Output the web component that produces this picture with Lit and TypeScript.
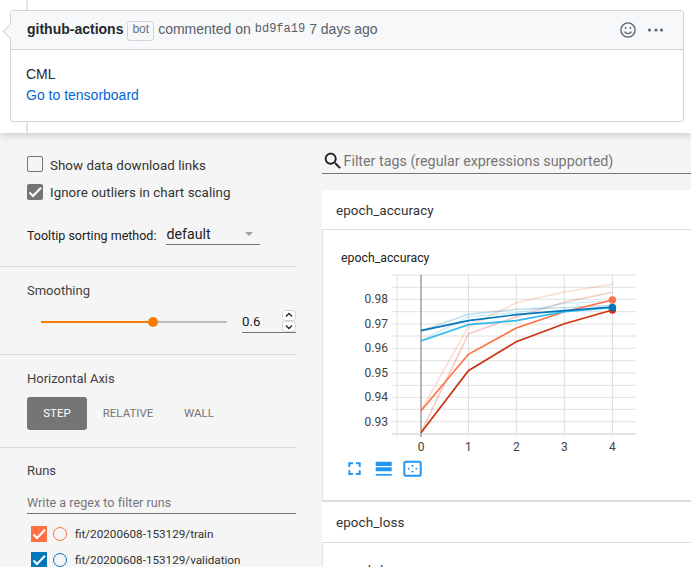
import { LitElement, html, css, svg } from 'lit';
import { customElement } from 'lit/decorators.js';

const X = [421, 468.4, 516.3, 564.3, 612.4];
const line = (ys: number[]) => ys.map((y, i) => `${X[i]},${y}`).join(' ');

const SERIES = [
  { color: '#ff7043', raw: [410.7, 326.7, 302.7, 292, 284.3], smooth: [410.7, 354.3, 328, 311.7, 300] },
  { color: '#cc3311', raw: [432.7, 334, 316.7, 302.3, 292.3], smooth: [432.7, 370.7, 341.7, 323.7, 310] },
  { color: '#33bbee', raw: [341, 316.7, 312.7, 303.3, 301], smooth: [341, 324.7, 320.7, 311.7, 307.7] },
  { color: '#0077bb', raw: [330.7, 314.3, 309.3, 307.7, 305.3], smooth: [330.7, 320.7, 314.7, 310.7, 307] },
];

const H_GRID = [275, 287.3, 299.3, 311.7, 324, 336, 348.3, 360.7, 373, 385.3, 397.3, 409.3, 421.7];
const Y_LABELS: [string, number][] = [
  ['0.98', 299.3], ['0.97', 324], ['0.96', 348.3], ['0.95', 373], ['0.94', 397.3], ['0.93', 421.7],
];

const check = html`<svg viewBox="0 0 16 16" width="16" height="16"><path d="M2.5 8.5l3.5 3.5L14 3.8" fill="none" stroke="#fff" stroke-width="2"/></svg>`;

@customElement('app-root')
export class AppRoot extends LitElement {
  static styles = css`
    :host {
      display: block;
      height: 567px;
      overflow: hidden;
      background: #f5f5f5;
      font-family: Roboto, sans-serif;
      color: #212121;
    }

    .top {
      height: 133px;
      box-sizing: border-box;
      padding: 10px 7px 11px 10px;
      background: linear-gradient(#e1e4e8, #e1e4e8) 26px 0 / 2px 100% no-repeat, #fff;
      box-shadow: 0 2px 8px rgba(0, 0, 0, 0.18);
      position: relative;
      font-family: 'Liberation Sans', sans-serif;
    }
    .comment {
      position: relative;
      height: 112px;
      box-sizing: border-box;
      border: 1px solid #d1d5da;
      border-radius: 3px;
      background: #fff;
    }
    .comment::before {
      content: '';
      position: absolute;
      left: -6px;
      top: 15px;
      width: 10px;
      height: 10px;
      background: #f6f8fa;
      border-left: 1px solid #d1d5da;
      border-bottom: 1px solid #d1d5da;
      transform: rotate(45deg);
    }
    .comment-head {
      height: 39px;
      box-sizing: border-box;
      display: flex;
      align-items: center;
      padding: 0 20px 3px 16px;
      background: #f6f8fa;
      border-bottom: 1px solid #d1d5da;
      border-radius: 3px 3px 0 0;
      font-size: 14px;
      color: #586069;
      position: relative;
    }
    .author { font-weight: 700; color: #24292e; }
    .bot {
      box-sizing: border-box;
      height: 20px;
      line-height: 14px;
      margin: 5px 4px 0 4px;
      padding: 0 4px;
      border: 1px solid #d1d5da;
      border-radius: 3px;
      font-size: 12px;
      color: #6a737d;
    }
    .sha { font-family: 'Liberation Mono', monospace; font-size: 12px; margin: 0 4px; }
    .actions { margin: 3px 0 0 auto; display: flex; align-items: center; gap: 11px; }
    .actions svg { display: block; }
    .comment-body { padding: 14px 15px; font-size: 14px; line-height: 21px; color: #24292e; }
    .comment-body a { color: #0366d6; text-decoration: none; display: block; }

    .main { display: flex; gap: 26px; }
    .side { width: 296px; flex: none; }
    .section { padding-left: 27px; border-bottom: 1px solid #d9d9d9; box-sizing: border-box; }
    .s1 { height: 134px; padding-top: 23px; }
    .s2 { height: 88px; padding-top: 16px; }
    .s3 { height: 93px; padding-top: 16px; }
    .s4 { border-bottom: none; padding-top: 15px; }
    .check { display: flex; align-items: center; gap: 7px; height: 16px; margin-bottom: 12px; font-size: 13.33px; letter-spacing: 0.05px; color: #333; }
    .check span.text { position: relative; top: 1px; }
    .check.second span.text { top: 0; }
    .box {
      width: 16px;
      height: 16px;
      box-sizing: border-box;
      border: 1px solid #757575;
      border-radius: 2px;
      flex: none;
    }
    .box.on { background: #757575; border: none; }
    .box svg { display: block; }
    .tooltip { display: flex; align-items: flex-end; margin-top: 20px; font-size: 12.5px; color: #212121; }
    .tooltip > span { padding-bottom: 2px; }
    .select {
      width: 94px;
      height: 25px;
      margin-left: 10px;
      box-sizing: border-box;
      border-bottom: 1px solid #757575;
      font-size: 14.2px;
      display: flex;
      align-items: center;
      justify-content: space-between;
      padding: 3px 8px 0 0;
    }
    .caret { width: 0; height: 0; border: 4px solid transparent; border-top: 4px solid #9e9e9e; border-bottom: none; margin-right: -1px; }
    .label { font-size: 13px; line-height: 16px; color: #424242; }
    .smooth { display: flex; align-items: flex-end; margin-top: 10px; width: 269px; }
    .slider { width: 186px; height: 20px; margin: 0 15px 0 14px; position: relative; background: linear-gradient(90deg, #f57c00 60%, #bdbdbd 60%) 0 8px / 100% 2px no-repeat; }
    .thumb { position: absolute; left: 107px; top: 4px; width: 10px; height: 10px; border-radius: 50%; background: #f57c00; }
    .num { width: 54px; height: 24px; box-sizing: border-box; border-bottom: 1px solid #757575; font-size: 13.3px; line-height: 26px; display: flex; justify-content: space-between; }
    .spin { display: block; margin-top: 1px; }
    .toggle { display: flex; margin-top: 10px; }
    .toggle span { height: 33px; line-height: 33px; text-align: center; font-size: 11.5px; color: #757575; border-radius: 3px; }
    .toggle .active { width: 60px; background: #757575; color: #fff; }
    .toggle .rel { width: 82px; }
    .toggle .wall { width: 30px; margin-left: 15px; }
    .regex { width: 269px; height: 22px; margin-top: 13px; box-sizing: border-box; border-bottom: 1px solid #757575; font-size: 12.5px; line-height: 21px; color: #757575; letter-spacing: 0.05px; }
    .run { display: flex; align-items: center; height: 16px; margin: 12px 0 0 4px; font-size: 11.7px; color: #333; }
    .swatch { width: 16px; height: 16px; flex: none; }
    .swatch svg { display: block; }
    .ring { width: 14px; height: 14px; box-sizing: border-box; margin: 0 8px 0 6px; border: 1.5px solid; border-radius: 50%; flex: none; }

    .content { width: 369px; flex: none; }
    .search { display: flex; align-items: center; height: 30px; margin-top: 11px; margin-bottom: 16px; box-sizing: border-box; padding-top: 5px; border-bottom: 1px solid #757575; font-size: 14.3px; color: #757575; }
    .search svg { flex: none; margin-right: -0.5px; }
    .card-head { height: 40px; box-sizing: border-box; background: #fff; border-bottom: 1px solid #ddd; padding: 0 14px; font-size: 13.5px; line-height: 41px; color: #333; letter-spacing: 0.05px; }
    .card-head.second { height: 41px; }
    .card-body { height: 272px; box-sizing: border-box; background: #fff; border-left: 1px solid #e4e4e4; border-bottom: 2px solid #ddd; padding: 20px 0 0 18px; }
    .title { font-size: 12.3px; line-height: 16px; color: #212121; }
    .plot { display: block; margin-top: 4px; }
    .tools { display: flex; align-items: center; margin: 0 0 0 7px; }
    .tools svg { display: block; }
  `;

  renderPlot() {
    return html`<svg class="plot" width="310" height="190" viewBox="341 270 310 190" font-family="Roboto, sans-serif" font-size="12" fill="#424242">
      ${H_GRID.map((y) => svg`<line x1="392" x2="636" y1=${y} y2=${y} stroke="#e0e0e0"/>`)}
      <line x1="397" x2="397" y1="275" y2="437" stroke="#e0e0e0"/>
      ${X.slice(1).map((x) => svg`<line x1=${x} x2=${x} y1="275" y2="437" stroke="#dcdcdc"/>`)}
      <line x1="392" x2="636" y1="434" y2="434" stroke="#e4e4e4" stroke-width="2"/>
      <line x1="421" x2="421" y1="275" y2="437" stroke="#b5b5b5" stroke-width="2"/>
      ${Y_LABELS.map(([t, y]) => svg`<text x="388" y=${y + 4} text-anchor="end">${t}</text>`)}
      ${X.map((x, i) => svg`<text x=${x} y="451" text-anchor="middle">${i}</text>`)}
      ${SERIES.map((s) => svg`<polyline points=${line(s.raw)} fill="none" stroke=${s.color} stroke-width="1.6" opacity="0.24"/>`)}
      ${SERIES.map((s) => svg`<polyline points=${line(s.smooth)} fill="none" stroke=${s.color} stroke-width="1.7"/>`)}
      <circle cx="612.4" cy="310" r="3.7" fill="#cc3311"/>
      <circle cx="612.4" cy="300" r="3.7" fill="#ff7043"/>
      <circle cx="612.4" cy="307.4" r="3.7" fill="#0077bb"/>
    </svg>`;
  }

  render() {
    return html`
      <div class="top">
        <div class="comment">
          <div class="comment-head">
            <span class="author">github-actions</span>
            <span class="bot">bot</span>
            <span>commented on</span>
            <span class="sha">bd9fa19</span>
            <span>7 days ago</span>
            <div class="actions">
              <svg width="16" height="16" viewBox="0 0 16 16" fill="none" stroke="#586069" stroke-width="1.3">
                <circle cx="8" cy="8" r="7.1"/>
                <path d="M4.6 9.6c.8 1.4 2 2 3.4 2s2.6-.6 3.4-2" />
                <circle cx="5.6" cy="6" r=".9" fill="#586069" stroke="none"/>
                <circle cx="10.4" cy="6" r=".9" fill="#586069" stroke="none"/>
              </svg>
              <svg width="16" height="6" viewBox="0 0 16 6" fill="#586069">
                <circle cx="2.5" cy="3" r="1.5"/><circle cx="9" cy="3" r="1.5"/><circle cx="14.5" cy="3" r="1.5"/>
              </svg>
            </div>
          </div>
          <div class="comment-body">
            CML
            <a href="#">Go to tensorboard</a>
          </div>
        </div>
      </div>

      <div class="main">
        <div class="side">
          <div class="section s1">
            <div class="check"><span class="box"></span><span class="text">Show data download links</span></div>
            <div class="check second"><span class="box on">${check}</span><span class="text">Ignore outliers in chart scaling</span></div>
            <div class="tooltip">
              <span>Tooltip sorting method:</span>
              <div class="select">default<span class="caret"></span></div>
            </div>
          </div>
          <div class="section s2">
            <div class="label">Smoothing</div>
            <div class="smooth">
              <div class="slider"><span class="thumb"></span></div>
              <div class="num">
                <span>0.6</span>
                <svg class="spin" width="14" height="23" viewBox="0 0 14 23">
                  <rect x=".5" y=".5" width="13" height="10" rx="3" fill="#fff" stroke="#d5d5d5"/>
                  <rect x=".5" y="11.5" width="13" height="10" rx="3" fill="#fff" stroke="#d5d5d5"/>
                  <path d="M4 6.5l3-3 3 3M4 15.5l3 3 3-3" fill="none" stroke="#222" stroke-width="1.3"/>
                </svg>
              </div>
            </div>
          </div>
          <div class="section s3">
            <div class="label">Horizontal Axis</div>
            <div class="toggle">
              <span class="active">STEP</span>
              <span class="rel">RELATIVE</span>
              <span class="wall">WALL</span>
            </div>
          </div>
          <div class="section s4">
            <div class="label">Runs</div>
            <div class="regex">Write a regex to filter runs</div>
            <div class="run">
              <span class="swatch" style="background:#ff7043">${check}</span>
              <span class="ring" style="border-color:#ff7043"></span>
              fit/20200608-153129/train
            </div>
            <div class="run" style="margin-top:10px">
              <span class="swatch" style="background:#0077bb">${check}</span>
              <span class="ring" style="border-color:#0077bb"></span>
              fit/20200608-153129/validation
            </div>
          </div>
        </div>

        <div class="content">
          <div class="search">
            <svg width="22" height="22" viewBox="0 0 24 24" fill="#212121"><path d="M15.5 14h-.79l-.28-.27C15.41 12.59 16 11.11 16 9.5 16 5.91 13.09 3 9.5 3S3 5.91 3 9.5 5.91 16 9.5 16c1.61 0 3.09-.59 4.23-1.57l.27.28v.79l5 4.99L20.49 19l-4.99-5zm-6 0C7.01 14 5 11.99 5 9.5S7.01 5 9.5 5 14 7.01 14 9.5 11.99 14 9.5 14z"/></svg>
            Filter tags (regular expressions supported)
          </div>
          <div class="card-head">epoch_accuracy</div>
          <div class="card-body">
            <div class="title">epoch_accuracy</div>
            ${this.renderPlot()}
            <div class="tools">
              <svg width="80" height="18" viewBox="0 0 80 18" fill="none" stroke="#2196f3">
                <path d="M1.3 7V3.3h3.7M8 3.3h3.7V7M11.7 10.3V14H8M5 14H1.3v-3.7" stroke-width="2"/>
                <path d="M27.7 1.7h16V6h-16zM27.7 7.3h16v4h-16z" fill="#2196f3" stroke="none"/>
                <path d="M27.7 14.8h16" stroke-width="1.7"/>
                <rect x="56.3" y="1.7" width="16.4" height="14" rx="1.5" stroke-width="2"/>
                <path d="M64.5 4.4l-1.5 2h3zM64.5 13l-1.5-2h3zM59.3 8.7l2-1.5v3zM69.7 8.7l-2-1.5v3z" fill="#2196f3" stroke="none"/>
              </svg>
            </div>
          </div>
          <div class="card-head second">epoch_loss</div>
          <div class="card-body">
            <div class="title">epoch_loss</div>
          </div>
        </div>
      </div>
    `;
  }
}
